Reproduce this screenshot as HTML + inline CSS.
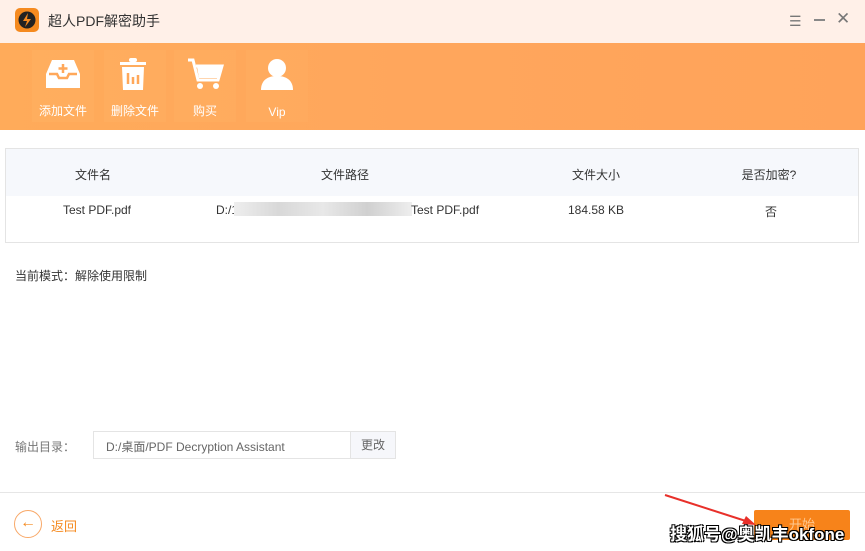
<!DOCTYPE html>
<html><head><meta charset="utf-8"><style>
*{margin:0;padding:0;box-sizing:border-box}
body{width:865px;height:551px;overflow:hidden;background:#fff;font-family:"Liberation Sans","Noto Sans CJK SC",sans-serif;position:relative;color:#333}
.abs{position:absolute}
.title{top:0;left:0;width:865px;height:43px;background:#fff0e8}
.bar{top:43px;left:0;width:865px;height:87px;background:linear-gradient(90deg,#ffab5a,#ffa65c 50%,#ffa35a)}
.tb{top:50px;width:62px;height:72px;background:rgba(255,200,120,.12);color:#fff;font-size:12px;text-align:center}
.tb span{position:absolute;bottom:3px;left:0;right:0}
.tb svg{position:absolute;left:13px;top:6px}
.tbl{top:148px;left:5px;width:854px;height:95px;border:1px solid #e4e4e4}
.th{position:absolute;top:0;left:0;right:0;height:47px;background:#f6f8fc;font-size:12px}
.c{position:absolute;font-size:12px;transform:translateX(-50%);white-space:nowrap}
</style></head><body>
<div class="abs title"></div>
<div class="abs" style="left:15px;top:8px;width:24px;height:24px;border-radius:5px;background:#f58a1f">
<svg width="24" height="24" viewBox="0 0 24 24"><circle cx="12" cy="12" r="8.5" fill="#222"/><path d="M13 5L8 13h4l-2 6 6-8h-4z" fill="#f58a1f"/></svg></div>
<div class="abs" style="left:48px;top:11px;font-size:14px;color:#333">超人PDF解密助手</div>
<div class="abs" style="left:789px;top:13px;color:#777;font-size:14px">☰</div>
<div class="abs" style="left:814px;top:19px;width:11px;height:1.5px;background:#888"></div>
<div class="abs" style="left:836px;top:9px;color:#777;font-size:17px">✕</div>
<div class="abs bar"></div>
<div class="abs tb" style="left:32px"><svg width="36" height="36" viewBox="0 0 36 36"><path d="M7 4h22l6 14v14H1V18z" fill="#fff"/><path d="M4 18h8l2 4h8l2-4h8" stroke="#ffa85a" stroke-width="2.5" fill="none"/><path d="M18 8v9M13.5 12.5h9" stroke="#ffa85a" stroke-width="2.5"/></svg><span>添加文件</span></div>
<div class="abs tb" style="left:104px"><svg width="36" height="36" viewBox="0 0 36 36"><rect x="3" y="6" width="26" height="3" fill="#fff"/><rect x="12" y="2" width="8" height="4" rx="2" fill="#fff"/><path d="M5 11h22l-1 23H6z" fill="#fff"/><path d="M11 17v11M16 21v7M21 19v9" stroke="#ffa85a" stroke-width="2.5"/></svg><span>删除文件</span></div>
<div class="abs tb" style="left:174px"><svg width="40" height="36" viewBox="0 0 40 36"><path d="M1 4h5l5 20h20l4-14H9" stroke="#fff" stroke-width="3" fill="none"/><path d="M10 11h24l-3 11H12z" fill="#fff"/><circle cx="13" cy="30" r="3" fill="#fff"/><circle cx="29" cy="30" r="3" fill="#fff"/></svg><span>购买</span></div>
<div class="abs tb" style="left:246px"><svg width="36" height="36" viewBox="0 0 36 36"><circle cx="18" cy="12" r="9" fill="#fff"/><path d="M2 34c0-10 7-14 16-14s16 4 16 14z" fill="#fff"/></svg><span>Vip</span></div>
<div class="abs tbl"><div class="th"></div>
<div class="c" style="left:87px;top:17px">文件名</div>
<div class="c" style="left:339px;top:17px">文件路径</div>
<div class="c" style="left:590px;top:17px">文件大小</div>
<div class="c" style="left:763px;top:17px">是否加密?</div>
<div class="c" style="left:91px;top:54px">Test PDF.pdf</div>
<div class="abs" style="left:210px;top:54px;font-size:12px">D:/1</div>
<div class="abs" style="left:228px;top:53px;width:178px;height:14px;background:linear-gradient(90deg,#eee,#d8d8d8,#e8e8e8,#d0d0d0,#eee)"></div>
<div class="abs" style="left:405px;top:54px;font-size:12px">Test PDF.pdf</div>
<div class="c" style="left:590px;top:54px">184.58 KB</div>
<div class="c" style="left:765px;top:54px">否</div>
</div>
<div class="abs" style="left:15px;top:267px;font-size:12px;color:#333">当前模式：解除使用限制</div>
<div class="abs" style="left:15px;top:438px;font-size:12px;color:#777">输出目录：</div>
<div class="abs" style="left:93px;top:431px;width:303px;height:28px;border:1px solid #e4e4e4"></div>
<div class="abs" style="left:106px;top:438px;font-size:12px;color:#666">D:/桌面/PDF Decryption Assistant</div>
<div class="abs" style="left:350px;top:431px;width:46px;height:28px;background:#f6f7fb;border:1px solid #e4e4e4;font-size:12px;color:#666;text-align:center;line-height:26px">更改</div>
<div class="abs" style="left:0;top:492px;width:865px;height:1px;background:#e6e6e6"></div>
<div class="abs" style="left:14px;top:510px;width:28px;height:28px;border:1.5px solid #f8a868;border-radius:50%;color:#f58a1f;font-size:16px;text-align:center;line-height:24px">←</div>
<div class="abs" style="left:51px;top:516px;font-size:13px;color:#f58a1f">返回</div>
<div class="abs" style="left:754px;top:510px;width:96px;height:30px;background:#f7831a;border-radius:2px;color:#ffc890;font-size:13px;text-align:center;line-height:30px">开始</div>
<svg class="abs" style="left:660px;top:490px" width="100" height="40"><path d="M5 5L92 33" stroke="#e8302a" stroke-width="2"/><path d="M96 35l-14-1 4-8z" fill="#e8302a"/></svg>
<div class="abs" style="left:670px;top:520px;font-size:17px;color:#fff;font-weight:bold;text-shadow:-1px -1px 0 #000,1px -1px 0 #000,-1px 1px 0 #000,1px 1px 0 #000">搜狐号@奥凯丰okfone</div>
</body></html>
